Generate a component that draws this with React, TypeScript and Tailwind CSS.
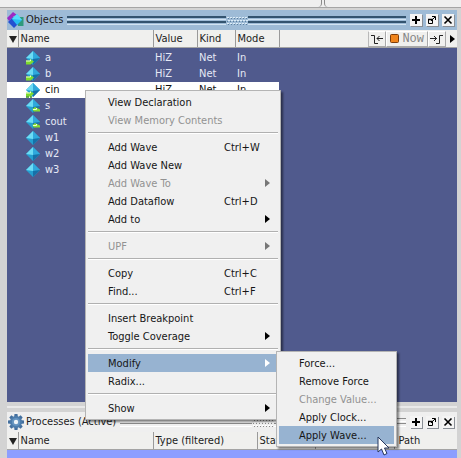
import React from "react";

type Signal = { name: string; port?: "in" | "out" };

const signals: Signal[] = [
  { name: "a", port: "in" },
  { name: "b", port: "in" },
  { name: "cin", port: "in" },
  { name: "s", port: "out" },
  { name: "cout", port: "out" },
  { name: "w1" },
  { name: "w2" },
  { name: "w3" },
];

type Item = { label: string; keys?: string; sub?: boolean; off?: boolean; on?: boolean };

const mainMenu: Item[][] = [
  [{ label: "View Declaration" }, { label: "View Memory Contents", off: true }],
  [
    { label: "Add Wave", keys: "Ctrl+W" },
    { label: "Add Wave New" },
    { label: "Add Wave To", sub: true, off: true },
    { label: "Add Dataflow", keys: "Ctrl+D" },
    { label: "Add to", sub: true },
  ],
  [{ label: "UPF", sub: true, off: true }],
  [
    { label: "Copy", keys: "Ctrl+C" },
    { label: "Find...", keys: "Ctrl+F" },
  ],
  [{ label: "Insert Breakpoint" }, { label: "Toggle Coverage", sub: true }],
  [{ label: "Modify", sub: true, on: true }, { label: "Radix..." }],
  [{ label: "Show", sub: true }],
];

const modifyMenu: Item[][] = [
  [
    { label: "Force..." },
    { label: "Remove Force" },
    { label: "Change Value...", off: true },
    { label: "Apply Clock..." },
    { label: "Apply Wave...", on: true },
  ],
];

function SignalIcon({ port, selected }: { port?: "in" | "out"; selected: boolean }) {
  return (
    <svg width="16" height="16" viewBox="0 0 16 16" className="shrink-0">
      <path d="M8 1 15 8 8 15 1 8Z" fill="#249fd0" />
      <path d="M8 1 1 8 8 9Z" fill="#6cdcf4" />
      <path d="M8 1 15 8 8 9Z" fill="#2fa9dc" />
      <path d="M15 8 8 15V9Z" fill="#1670a8" />
      {port === "in" && <path d="M1 10.500h4V9l4 2.500-3.500 3H1Z" fill="#7ddc2c" />}
      {port === "in" && <path d="M1 11h4.500V9.500" fill="none" stroke="#eaffd0" />}
      {port === "in" && selected && <path d="M1 15h3m1 0h2" stroke="#3f9420" strokeWidth="1.500" />}
      {port === "out" && <path d="M7.500 11 10 9l5 2.500v2H8.500Z" fill="#86dc34" />}
      {port === "out" && <path d="M8 11.500h3.500V10" fill="none" stroke="#eaffd0" />}
    </svg>
  );
}

function ObjectsIcon() {
  return (
    <svg width="18" height="18" viewBox="0 0 18 18" className="shrink-0">
      <path d="M10 6h6.500v9H11Z" fill="#2f9a7c" />
      <path d="M0 7 6 1l4 3-3 1-5 5Z" fill="#9b2ac4" />
      <path d="M1 11 6 6l6 6-5 5Z" fill="#2450d0" />
      <path d="m10 3 5 6-5 5-5-6Z" fill="#28bdf2" />
      <path d="m10 3 5 6-10-1Z" fill="#54ddfb" />
    </svg>
  );
}

const teeth = [0, 45, 90, 135, 180, 225, 270, 315];

function GearIcon() {
  return (
    <svg width="18" height="18" viewBox="0 0 18 18" className="shrink-0">
      {teeth.map((a) => (
        <path key={a} d="M7.500 1h3l.5 4H7Z" fill="#436f9e" transform={`rotate(${a} 9 9)`} />
      ))}
      <circle cx="9" cy="9" r="6" fill="#4c7cac" />
      <circle cx="9" cy="9" r="4" fill="#6594c0" />
      <circle cx="9" cy="9" r="2.200" fill="#edf3f8" />
    </svg>
  );
}

function WindowButtons() {
  const button = "flex h-3 w-3 items-center justify-center bg-[#f4f4f4] shadow-[1px_1px_0_#8a8f96]";
  return (
    <div className="flex shrink-0 gap-1 pr-[3px]">
      <button aria-label="Add" className={button}>
        <svg width="10" height="10" viewBox="0 0 10 10">
          <path d="M5 1v8M1 5h8" stroke="#000" strokeWidth="2" />
        </svg>
      </button>
      <button aria-label="Undock" className={button}>
        <svg width="10" height="10" viewBox="0 0 10 10" fill="none" stroke="#000">
          <path d="M1.500 4.500h4v4h-4ZM4 6l4-4M5 1.500h3.500V5" />
          <path d="M1 4.500h5" strokeWidth="1.500" />
        </svg>
      </button>
      <button aria-label="Close" className={button}>
        <svg width="10" height="10" viewBox="0 0 10 10">
          <path d="m1.500 1.500 7 7m0-7-7 7" stroke="#000" strokeWidth="1.600" />
        </svg>
      </button>
    </div>
  );
}

function Grip({ active }: { active?: boolean }) {
  const line = active
    ? "h-1 w-full border-t-2 border-b border-t-[#34546f] border-b-[#d3e4f2]"
    : "h-1 w-full border-y border-t-[#8b8b8b] border-b-white";
  return (
    <div className="flex min-w-0 flex-1 items-center">
      <div className="flex flex-1 flex-col gap-px">
        <div className={line} />
        <div className={line} />
      </div>
      <svg width="22" height="9" viewBox="0 0 22 9" className="shrink-0">
        <path d="M1 1.500h20M2 4.500h20M1 7.500h20" stroke={active ? "#dcecf7" : "#ffffff"} strokeDasharray="2 1" />
        <path d="M2 2.500h20M1 5.500h20M2 8.500h20" stroke={active ? "#5b7f9e" : "#8b8b8b"} strokeDasharray="1 2" />
      </svg>
      <div className="flex flex-1 flex-col gap-px">
        <div className={line} />
        <div className={line} />
      </div>
    </div>
  );
}

function TitleBar({ title, icon, active }: { title: string; icon: React.ReactNode; active?: boolean }) {
  return (
    <header className={`flex h-5 shrink-0 items-center gap-1 ${active ? "bg-[#9ebbd6]" : "bg-[#efefef]"}`}>
      <div className="flex items-center gap-px">
        {icon}
        <h2 className="whitespace-nowrap">{title}</h2>
      </div>
      <Grip active={active} />
      <WindowButtons />
    </header>
  );
}

const th = "border-r border-r-[#9a9a9a] border-b border-b-[#a4a4a4] bg-[#f0f0ee] pt-px pl-0.5 text-left font-normal whitespace-nowrap";

function SortMark() {
  return (
    <svg width="8" height="8" viewBox="0 0 8 8">
      <path d="M0 1h8L4 8Z" fill="#222" />
    </svg>
  );
}

function NowTools() {
  const box = "flex h-4 items-center border border-white border-r-[#a9a9a9] border-b-[#a9a9a9]";
  return (
    <div className="flex items-center justify-end">
      <button aria-label="Previous event" className={`${box} border-l-[#b9b9b9] px-px`}>
        <svg width="14" height="12" viewBox="0 0 14 12" fill="none" stroke="#222">
          <path d="M1 2.500h3.500v8H8M13 5.500H7M9.500 3 7 5.500 9.500 8" />
        </svg>
      </button>
      <button className={`${box} gap-[3px] px-[3px] font-['Liberation_Mono',monospace] text-xs text-[#858585]`}>
        <svg width="9" height="9" viewBox="0 0 9 9">
          <rect x=".5" y=".5" width="8" height="8" rx="1" fill="#f0851d" stroke="#7d3d0b" />
        </svg>
        Now
      </button>
      <button aria-label="Next event" className={`${box} px-px`}>
        <svg width="14" height="12" viewBox="0 0 14 12" fill="none" stroke="#222">
          <path d="M13 2.500H9.500v8H6M0 5.500h7M4 3l2.500 2.500L4 8" />
        </svg>
      </button>
      <button aria-label="More" className="pr-0.5 pl-1">
        <svg width="5" height="8" viewBox="0 0 5 8">
          <path d="M0 0v8l5-4Z" fill="#000" />
        </svg>
      </button>
    </div>
  );
}

function ObjectsTable() {
  return (
    <table className="w-full table-fixed border-collapse">
      <colgroup>
        <col className="w-[11px]" />
        <col className="w-[135px]" />
        <col className="w-11" />
        <col className="w-[38px]" />
        <col className="w-11" />
        <col />
      </colgroup>
      <thead>
        <tr className="h-[17px]">
          <th className={th} aria-label="Sort"><SortMark /></th>
          <th className={th}>Name</th>
          <th className={th}>Value</th>
          <th className={th}>Kind</th>
          <th className={th}>Mode</th>
          <th className="border-b border-b-[#a4a4a4] bg-[#f0f0ee] font-normal"><NowTools /></th>
        </tr>
      </thead>
      <tbody className="before:block before:h-0.5">
        {signals.map((s) => {
          const selected = s.name === "cin";
          const cell = selected ? "bg-white pl-0.5 text-[#111]" : "pl-0.5 text-[#e6e9f5]";
          const driven = s.port === "in";
          return (
            <tr key={s.name} className="h-4">
              <td colSpan={2} className={cell}>
                <div className="flex items-center gap-1 pl-4">
                  <SignalIcon port={s.port} selected={selected} />
                  {s.name}
                </div>
              </td>
              <td className={cell}>{driven && "HiZ"}</td>
              <td className={cell}>{driven && "Net"}</td>
              <td className={cell}>{driven && "In"}</td>
              <td />
            </tr>
          );
        })}
      </tbody>
    </table>
  );
}

function ProcessesTable() {
  return (
    <table className="w-full table-fixed border-collapse">
      <colgroup>
        <col className="w-[11px]" />
        <col className="w-[135px]" />
        <col className="w-[104px]" />
        <col className="w-[58px]" />
        <col className="w-[79px]" />
        <col />
      </colgroup>
      <thead>
        <tr className="h-[17px]">
          <th className={th} aria-label="Sort"><SortMark /></th>
          <th className={th}>Name</th>
          <th className={th}>Type (filtered)</th>
          <th className={th}>State</th>
          <th className={th} />
          <th className="border-b border-b-[#a4a4a4] bg-[#f0f0ee] pt-px pl-1 text-left font-normal">Path</th>
        </tr>
      </thead>
    </table>
  );
}

function Menu({ groups, label, place }: { groups: Item[][]; label: string; place: string }) {
  return (
    <div
      role="menu"
      aria-label={label}
      className={`absolute border border-[#b4b4b4] bg-[#f0f0f0] p-0.5 shadow-[2px_2px_2px_#0007] ${place}`}
    >
      {groups.map((group, i) => (
        <div key={i} role="group">
          {i > 0 && <hr className="mt-[3px] mb-1 border-t border-b border-t-[#b0b0b0] border-b-white" />}
          {group.map((item) => {
            const ink = item.off ? "text-[#929292]" : "text-[#161616]";
            return (
              <button
                key={item.label}
                role="menuitem"
                disabled={item.off}
                className={`flex h-[18px] w-full items-center pt-0.5 pr-2 pl-5 text-left whitespace-nowrap ${ink} ${item.on ? "bg-[#97b3d1]" : ""}`}
              >
                <span className="flex-1">{item.label}</span>
                {item.keys && <span className="w-[46px]">{item.keys}</span>}
                {item.sub && (
                  <svg width="5" height="8" viewBox="0 0 5 8" className="mb-0.5">
                    <path d="M0 0v8l5-4Z" fill={item.on ? "#fff" : item.off ? "#777" : "#000"} />
                  </svg>
                )}
              </button>
            );
          })}
        </div>
      ))}
    </div>
  );
}

export default function App() {
  return (
    <main className="relative flex h-screen flex-col overflow-hidden bg-[#d3d3d3] pr-1 pl-[7px] font-['DejaVu_Sans_Condensed','DejaVu_Sans',sans-serif] text-[11px] leading-4 text-[#1c1c1c]">
      <div className="-mr-1 -ml-[7px] flex h-2 shrink-0 border-b border-[#a5a5a5] bg-[#efefef]">
        <div className="w-[322px] rounded-br-sm border-r border-[#8a8a8a]" />
        <div className="ml-0.5 flex-1 rounded-bl-sm border-l border-[#8a8a8a]" />
      </div>
      <section className="mt-0.5 flex min-h-0 flex-1 flex-col bg-[#505a8d]">
        <TitleBar title="Objects" icon={<ObjectsIcon />} active />
        <ObjectsTable />
      </section>
      <div className="my-1 h-0.5 shrink-0 bg-[#e9e9e9]" />
      <section className="flex h-[46px] shrink-0 flex-col bg-[#8c9eff]">
        <TitleBar title="Processes (Active)" icon={<GearIcon />} />
        <ProcessesTable />
      </section>

      <Menu groups={mainMenu} label="Object actions" place="top-[90px] left-[85px] w-[196px]" />
      <Menu groups={modifyMenu} label="Modify" place="top-[351px] left-[276px] w-[121px]" />
      <svg width="13" height="20" viewBox="0 0 13 20" className="absolute top-[436px] left-[377px]">
        <path d="M1 1v15l3.500-3 2.500 6 3-1.500-2.500-5.500H12Z" fill="#fff" stroke="#26365c" />
      </svg>
    </main>
  );
}
